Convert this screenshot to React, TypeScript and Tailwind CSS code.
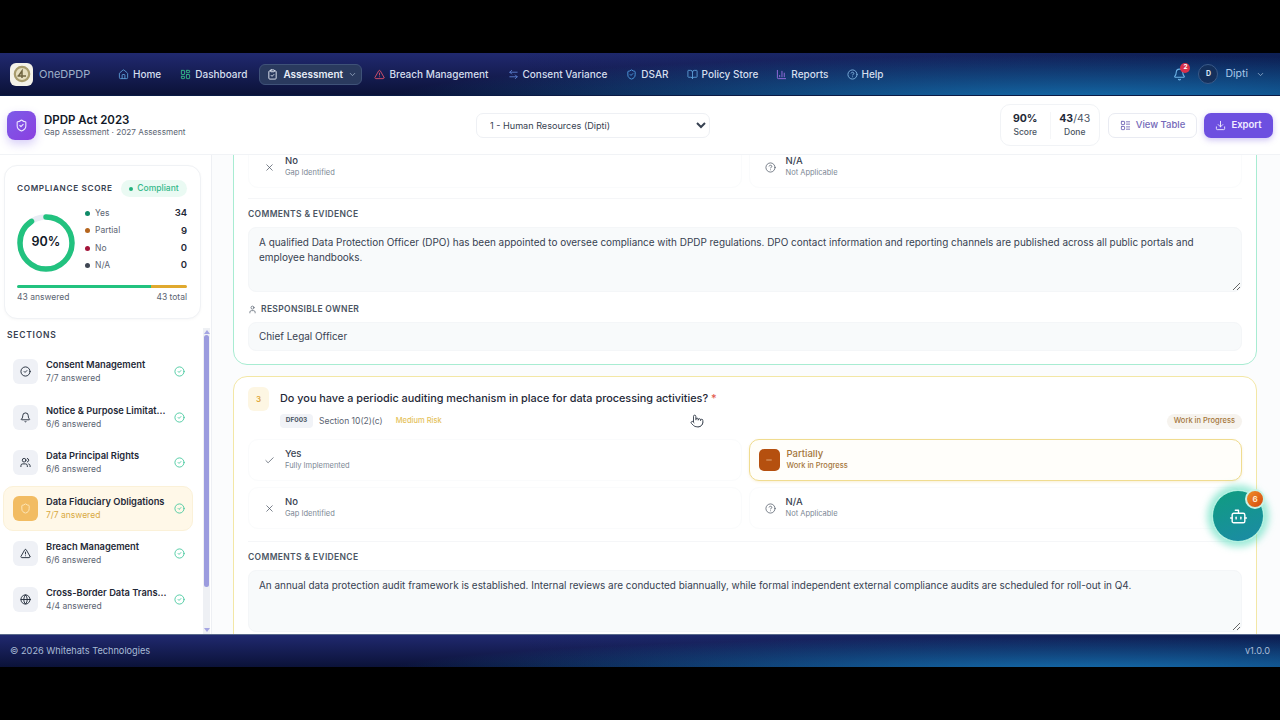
import {
  Home,
  LayoutDashboard,
  ClipboardCheck,
  TriangleAlert,
  ArrowLeftRight,
  ShieldCheck,
  BookOpen,
  ChartColumn,
  CircleHelp,
  Bell,
  ChevronDown,
  Download,
  LayoutList,
  CircleCheck,
  Users,
  Shield,
  Globe,
  Check,
  X,
  Minus,
  User,
  Bot,
  Pointer,
} from "lucide-react";

const navLinks = [
  { label: "Home", icon: Home, color: "text-[#5b9bd5]", gap: "mr-[19px]" },
  { label: "Dashboard", icon: LayoutDashboard, color: "text-[#34b98a]", gap: "mr-[12px]" },
];

const navLinksRight = [
  { label: "Breach Management", icon: TriangleAlert, color: "text-[#d9506a]", gap: "mr-[19px]" },
  { label: "Consent Variance", icon: ArrowLeftRight, color: "text-[#5b7fd0]", gap: "mr-[19px]" },
  { label: "DSAR", icon: ShieldCheck, color: "text-[#4f9be0]", gap: "mr-[18px]" },
  { label: "Policy Store", icon: BookOpen, color: "text-[#5b9bd5]", gap: "mr-[18px]" },
  { label: "Reports", icon: ChartColumn, color: "text-[#9a6fe0]", gap: "mr-[18px]" },
  { label: "Help", icon: CircleHelp, color: "text-[#7fb2e0]", gap: "" },
];

const legend = [
  { label: "Yes", value: 34, dot: "bg-[#0f8a68]" },
  { label: "Partial", value: 9, dot: "bg-[#b5651d]" },
  { label: "No", value: 0, dot: "bg-[#a3143a]" },
  { label: "N/A", value: 0, dot: "bg-[#3f4653]" },
];

const sections = [
  { title: "Consent Management", sub: "7/7 answered", icon: CircleCheck },
  { title: "Notice & Purpose Limitat...", sub: "6/6 answered", icon: Bell },
  { title: "Data Principal Rights", sub: "6/6 answered", icon: Users },
  { title: "Data Fiduciary Obligations", sub: "7/7 answered", icon: Shield, active: true },
  { title: "Breach Management", sub: "6/6 answered", icon: TriangleAlert },
  { title: "Cross-Border Data Trans...", sub: "4/4 answered", icon: Globe },
];

function OptionRow({ icon: Icon, title, sub }: { icon: typeof Check; title: string; sub: string }) {
  return (
    <div className="h-[42px] flex items-center pl-[15px] rounded-[10px] border border-[#fafbfc] bg-white">
      <Icon size={11} strokeWidth={1.6} className="text-[#4b5563] w-[11px] shrink-0" />
      <div className="ml-[10px]">
        <div className="text-[9.5px] leading-[11px] font-medium text-[#374151]">{title}</div>
        <div className="text-[7.5px] leading-[13px] text-[#7b8794]">{sub}</div>
      </div>
    </div>
  );
}

function FieldLabel({ children }: { children: React.ReactNode }) {
  return <div className="text-[8.5px] leading-[12px] font-semibold tracking-[0.04em] text-[#4b5563]">{children}</div>;
}

export default function App() {
  return (
    <div className="h-[720px] w-[1280px] overflow-hidden bg-black py-[53px] flex flex-col font-['Inter',sans-serif] relative">
      {/* Top nav */}
      <nav className="h-[43px] shrink-0 flex items-center pl-[10px] pr-[15px] border-b border-[#0a1a45] bg-[radial-gradient(ellipse_55%_110%_at_85%_115%,#1570b0,transparent),linear-gradient(90deg,transparent_40%,rgba(10,30,80,0.85)_100%),linear-gradient(180deg,#20296f,#0b1238)]">
        <div className="w-[23px] h-[23px] rounded-[6px] bg-[#f4f2e8] flex items-center justify-center">
          <svg width="18" height="18" viewBox="0 0 18 18">
            <circle cx="9" cy="9" r="7.2" fill="#e6dfc0" stroke="#a89c6c" strokeWidth="2.2" />
            <path d="M5.5 11 L9 6 V13 M4.5 11 H13" stroke="#6f6540" strokeWidth="1.5" fill="none" />
          </svg>
        </div>
        <span className="ml-[6px] text-[11px] text-[#9fb0c9] w-[79px]">OneDPDP</span>
        {navLinks.map((l) => (
          <a key={l.label} className={`flex items-center gap-[4px] text-[10px] font-medium text-[#d5dfee] ${l.gap}`}>
            <l.icon size={11} className={l.color} />
            {l.label}
          </a>
        ))}
        <a className="h-[21px] w-[103px] mr-[12px] flex items-center gap-[5px] pl-[7px] rounded-[6px] border border-[#3f5278] bg-[#2a3a5e] text-[10px] font-semibold text-[#e8eef8]">
          <ClipboardCheck size={11} />
          Assessment
          <ChevronDown size={9} className="text-[#9fb0c9]" />
        </a>
        {navLinksRight.map((l) => (
          <a key={l.label} className={`flex items-center gap-[4px] text-[10px] font-medium text-[#d5dfee] ${l.gap}`}>
            <l.icon size={11} className={l.color} />
            {l.label}
          </a>
        ))}
        <div className="ml-auto flex items-center">
          <div className="relative mr-[12px]">
            <Bell size={13} className="text-[#6fb5e8]" />
            <span className="absolute -top-[5px] -right-[4px] w-[10px] h-[10px] rounded-full bg-[#d9304a] text-white text-[6.5px] font-bold flex items-center justify-center">
              2
            </span>
          </div>
          <div className="w-[20px] h-[20px] rounded-full bg-[#14305c] border border-[#3a5a88] text-[#dbe6f4] text-[7px] font-bold flex items-center justify-center">
            D
          </div>
          <span className="ml-[7px] text-[10.5px] text-[#a9c8e8]">Dipti</span>
          <ChevronDown size={9} className="ml-[8px] text-[#9fb8d4]" />
        </div>
      </nav>

      {/* Assessment toolbar */}
      <header className="h-[59px] shrink-0 flex items-center pl-[7px] pr-[7px] bg-white border-b border-[#f1f3f6]">
        <div className="w-[29px] h-[29px] rounded-[8px] bg-[linear-gradient(135deg,#7c5ce8,#8b3fe0)] shadow-[0_4px_10px_rgba(124,92,232,0.3)] flex items-center justify-center">
          <ShieldCheck size={13} className="text-[#efe9ff]" />
        </div>
        <div className="ml-[8px] w-[432px]">
          <div className="text-[11.5px] leading-[14px] font-semibold text-[#111827]">DPDP Act 2023</div>
          <div className="text-[8.2px] leading-[10px] text-[#5b6472]">Gap Assessment · 2027 Assessment</div>
        </div>
        <select className="w-[234px] h-[25px] pl-[9px] pr-0 rounded-[7px] border border-[#eef0f4] bg-white text-[9.1px] text-[#374151] font-['Inter',sans-serif]">
          <option>1 - Human Resources (Dipti)</option>
        </select>
        <div className="ml-auto flex items-center h-[42px] w-[100px] rounded-[10px] border border-[#f1f3f6]">
          <div className="flex-1 text-center border-r border-[#f5f6f8]">
            <div className="text-[10.5px] leading-[14px] font-bold text-[#1f2937]">90%</div>
            <div className="text-[8.5px] leading-[13px] font-medium text-[#4b5563]">Score</div>
          </div>
          <div className="flex-1 text-center">
            <div className="text-[10.5px] leading-[14px] font-bold text-[#1f2937]">
              43<span className="font-normal text-[#4b5563]">/43</span>
            </div>
            <div className="text-[8.5px] leading-[13px] font-medium text-[#4b5563]">Done</div>
          </div>
        </div>
        <button className="ml-[8px] w-[89px] h-[25px] rounded-[7px] border border-[#e9ebf2] bg-white flex items-center justify-center gap-[5px] text-[9.5px] font-medium text-[#7468b8]">
          <LayoutList size={11} />
          View Table
        </button>
        <button className="ml-[7px] w-[69px] h-[25px] rounded-[7px] bg-[#6d4fe0] shadow-[0_2px_6px_rgba(109,79,224,0.35)] flex items-center justify-center gap-[5px] text-[9.5px] font-semibold text-[#f1edff]">
          <Download size={11} />
          Export
        </button>
      </header>

      <div className="flex-1 min-h-0 flex bg-[#fbfcfd]">
        {/* Sidebar */}
        <aside className="w-[212px] shrink-0 relative border-r border-[#eef0f4] bg-white pl-[4px] pt-[10px] overflow-hidden">
          <div className="w-[197px] h-[154px] rounded-[13px] border border-[#f0f2f5] bg-white pl-[12px] pr-[13px] shadow-[0_1px_3px_rgba(15,23,42,0.03)]">
            <div className="flex items-center justify-between h-[44px] pt-[1px]">
              <span className="text-[8.2px] font-semibold tracking-[0.08em] text-[#374151] whitespace-nowrap">COMPLIANCE SCORE</span>
              <span className="h-[17px] w-[66px] rounded-full bg-[#eafaf3] flex items-center justify-center gap-[4px] text-[8.5px] font-medium text-[#35b88a]">
                <span className="w-[4px] h-[4px] rounded-full bg-[#22b07d]" />
                Compliant
              </span>
            </div>
            <div className="flex items-center h-[65px]">
              <div className="relative w-[58px] h-[58px] shrink-0">
                <svg width="58" height="58" viewBox="0 0 58 58" className="-rotate-90">
                  <circle cx="29" cy="29" r="26" fill="none" stroke="#e8ecf4" strokeWidth="5.5" />
                  <circle cx="29" cy="29" r="26" fill="none" stroke="#22c27f" strokeWidth="5.5" strokeLinecap="round" strokeDasharray="147 164" />
                </svg>
                <span className="absolute inset-0 flex items-center justify-center text-[12.5px] font-semibold text-[#111827]">90%</span>
              </div>
              <div className="flex-1 ml-[10px] -mt-[6px]">
                {legend.map((row) => (
                  <div key={row.label} className="h-[17.3px] flex items-center text-[8.5px]">
                    <span className={`w-[5px] h-[5px] rounded-full ${row.dot}`} />
                    <span className="ml-[5px] text-[#5b6472]">{row.label}</span>
                    <span className="ml-auto text-[9.5px] font-semibold text-[#1f2937]">{row.value}</span>
                  </div>
                ))}
              </div>
            </div>
            <div className="mt-[10px] h-[3px] rounded-full flex overflow-hidden">
              <div className="w-[79%] bg-[#22c27f]" />
              <div className="w-[21%] bg-[#e0a92e]" />
            </div>
            <div className="mt-[3px] flex justify-between text-[8.5px] text-[#5b6472]">
              <span>43 answered</span>
              <span>43 total</span>
            </div>
          </div>

          <div className="mt-[10px] ml-[3px] text-[8.5px] font-semibold tracking-[0.09em] text-[#374151]">SECTIONS</div>

          <div className="mt-[7px] w-[190px] -ml-[1px] flex flex-col">
            {sections.map((s) => (
              <div
                key={s.title}
                className={`h-[45.6px] shrink-0 flex items-center pl-[9px] rounded-[10px] border ${s.active ? "bg-[#fff8e8] border-[#fbf1d8]" : "border-transparent"}`}
              >
                <div
                  className={`w-[25px] h-[25px] rounded-[6px] flex items-center justify-center shrink-0 ${
                    s.active ? "bg-[#f2bc62] text-[#fde9c0]" : "bg-[#eff1f6] text-[#1f2937]"
                  }`}
                >
                  <s.icon size={11} />
                </div>
                <div className="ml-[8px] w-[125px]">
                  <div className="text-[9.3px] leading-[14px] font-semibold text-[#1f2937] whitespace-nowrap">{s.title}</div>
                  <div className={`text-[8.5px] leading-[13px] ${s.active ? "text-[#d9a93f]" : "text-[#5b6472]"}`}>{s.sub}</div>
                </div>
                <CircleCheck size={11} className="text-[#49c9a0] ml-[3px]" />
              </div>
            ))}
          </div>

          {/* Scrollbar */}
          <div className="absolute right-[1px] top-[173px] bottom-0 w-[7px] bg-[#eef0f4] flex flex-col items-center">
            <span className="mt-[2px] w-0 h-0 border-x-[3px] border-x-transparent border-b-[4px] border-b-[#a5a5e2]" />
            <span className="mt-[1px] w-[5px] h-[252px] rounded-full bg-[#9b9bde]" />
            <span className="mt-auto mb-[2px] w-0 h-0 border-x-[3px] border-x-transparent border-t-[4px] border-t-[#a5a5e2]" />
          </div>
        </aside>

        {/* Main scroller, already scrolled part way down */}
        <main className="flex-1 min-w-0 overflow-hidden pl-[21px] pr-[23px] relative">
          <div className="-mt-[22px] flex flex-col gap-[11px]">
            <section className="rounded-[14px] border border-[#a8ecd2] bg-white px-[14px] pt-[12px] h-[232px] shrink-0">
              <div className="grid grid-cols-2 gap-x-[7px]">
                <OptionRow icon={X} title="No" sub="Gap Identified" />
                <OptionRow icon={CircleHelp} title="N/A" sub="Not Applicable" />
              </div>
              <div className="mt-[10px] border-t border-[#f5f6f8]" />
              <div className="mt-[9px]">
                <FieldLabel>COMMENTS &amp; EVIDENCE</FieldLabel>
              </div>
              <textarea
                readOnly
                className="mt-[7px] block w-full h-[65px] rounded-[8px] border border-[#f4f6f8] bg-[#f8fafb] px-[10px] py-[7px] text-[9.93px] leading-[15px] text-[#374151] resize-y outline-none"
                defaultValue="A qualified Data Protection Officer (DPO) has been appointed to oversee compliance with DPDP regulations. DPO contact information and reporting channels are published across all public portals and employee handbooks."
              />
              <div className="mt-[11px] flex items-center gap-[4px]">
                <User size={9} className="text-[#5b6472]" />
                <FieldLabel>RESPONSIBLE OWNER</FieldLabel>
              </div>
              <div className="mt-[7px] h-[29px] flex items-center rounded-[8px] border border-[#f4f6f8] bg-[#f8fafb] px-[10px] text-[9.93px] text-[#374151]">
                Chief Legal Officer
              </div>
            </section>

            <section className="rounded-[14px] border border-[#f3e7a6] bg-white px-[14px] pt-[10px] h-[300px] shrink-0">
              <div className="flex">
                <div className="w-[21px] h-[24px] rounded-[6px] bg-[#fdf6e3] text-[#e0a83c] text-[8px] font-semibold flex items-center justify-center shrink-0">
                  3
                </div>
                <div className="ml-[11px] flex-1">
                  <div className="text-[10.87px] leading-[22px] font-medium text-[#1f2937]">
                    Do you have a periodic auditing mechanism in place for data processing activities? <span className="text-[#e2574c]">*</span>
                  </div>
                  <div className="mt-[4px] flex items-center h-[16px]">
                    <span className="h-[14px] w-[33px] justify-center rounded-[4px] bg-[#f1f3f7] text-[6.5px] font-bold text-[#4b5563] flex items-center">DF003</span>
                    <span className="ml-[6px] text-[8.5px] text-[#5b6472]">Section 10(2)(c)</span>
                    <span className="ml-[13px] text-[7.5px] font-medium text-[#e5c25b]">Medium Risk</span>
                    <span className="ml-auto h-[15px] px-[7px] rounded-full bg-[#f6f3ee] text-[7.5px] font-medium text-[#a5763a] flex items-center">
                      Work in Progress
                    </span>
                  </div>
                </div>
              </div>
              <div className="mt-[10px] grid grid-cols-2 gap-x-[7px] gap-y-[6px]">
                <OptionRow icon={Check} title="Yes" sub="Fully Implemented" />
                <div className="h-[42px] flex items-center pl-[9px] rounded-[10px] border border-[#f0dc90] bg-[#fffefa] shadow-[0_1px_3px_rgba(224,180,60,0.2)]">
                  <div className="w-[21px] h-[22px] rounded-[5px] bg-[#b5500f] flex items-center justify-center">
                    <Minus size={8} className="text-[#f8d6b0]" />
                  </div>
                  <div className="ml-[7px]">
                    <div className="text-[9.5px] leading-[11px] font-medium text-[#a5763a]">Partially</div>
                    <div className="text-[7.5px] leading-[13px] font-medium text-[#a5763a]">Work in Progress</div>
                  </div>
                </div>
                <OptionRow icon={X} title="No" sub="Gap Identified" />
                <OptionRow icon={CircleHelp} title="N/A" sub="Not Applicable" />
              </div>
              <div className="mt-[12px] border-t border-[#f5f6f8]" />
              <div className="mt-[9px]">
                <FieldLabel>COMMENTS &amp; EVIDENCE</FieldLabel>
              </div>
              <textarea
                readOnly
                className="mt-[7px] block w-full h-[62px] rounded-[8px] border border-[#f4f6f8] bg-[#f8fafb] px-[10px] py-[7px] text-[9.93px] leading-[15px] text-[#374151] resize-y outline-none"
                defaultValue="An annual data protection audit framework is established. Internal reviews are conducted biannually, while formal independent external compliance audits are scheduled for roll-out in Q4."
              />
            </section>
          </div>
        </main>
      </div>

      {/* Footer */}
      <footer className="h-[33px] shrink-0 flex items-center justify-between px-[10px] border-t border-[#5a6a8c] bg-[radial-gradient(ellipse_55%_110%_at_85%_115%,#1570b0,transparent),linear-gradient(90deg,transparent_40%,rgba(10,30,80,0.85)_100%),linear-gradient(180deg,#20296f,#0b1238)] text-[9.2px] text-[#a9bcd6]">
        <span>© 2026 Whitehats Technologies</span>
        <span>v1.0.0</span>
      </footer>

      {/* Floating assistant */}
      <button className="absolute left-[1212px] top-[490px] w-[52px] h-[52px] rounded-full border border-[#a5f0dc] bg-[linear-gradient(160deg,#0f9d80,#1c8aa6)] shadow-[0_0_7px_5px_rgba(94,222,190,0.6)] flex items-center justify-center">
        <Bot size={19} strokeWidth={1.8} className="text-white" />
        <span className="absolute -top-[2px] -right-[2px] w-[20px] h-[20px] rounded-full border-2 border-[#c9f3e6] bg-[linear-gradient(135deg,#f0902a,#d5480f)] text-[#ffe9d0] text-[8px] font-bold flex items-center justify-center">
          6
        </span>
      </button>

      {/* Cursor in the recording */}
      <Pointer size={14} strokeWidth={1.4} className="absolute left-[690px] top-[414px] text-[#1f2937] fill-white" />
    </div>
  );
}
